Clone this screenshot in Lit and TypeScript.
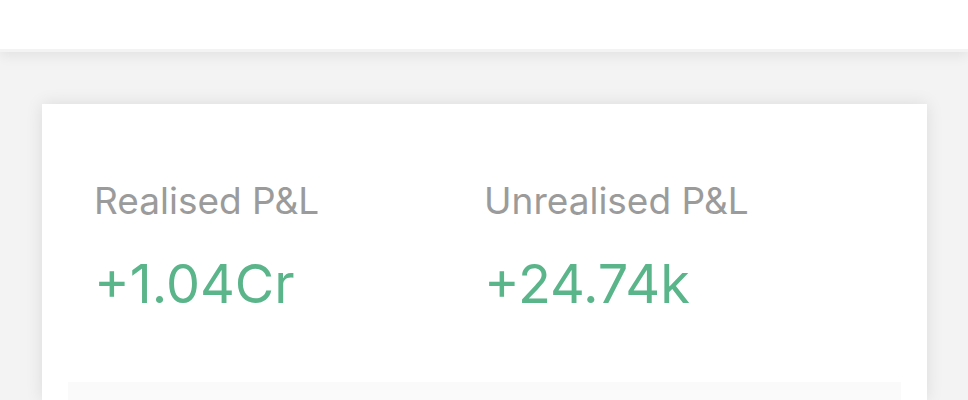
import { LitElement, html, css } from "lit";
import { customElement } from "lit/decorators.js";

const figures = [
  { label: "Realised P&L", value: "+1.04Cr" },
  { label: "Unrealised P&L", value: "+24.74k" },
];

@customElement("app-root")
export class AppRoot extends LitElement {
  static styles = css`
    :host {
      display: flex;
      flex-direction: column;
      min-height: 100vh;
      background: #f3f3f3;
      font-family: Inter, "Liberation Sans", sans-serif;
    }
    .topbar {
      height: 49px;
      background: #fff;
      border-bottom: 3px solid #f3f3f3;
      box-shadow: 0 4px 12px rgba(0, 0, 0, 0.07);
    }
    .card {
      display: flex;
      flex-direction: column;
      flex: 1;
      margin: 52px 41px 0 42px;
      padding: 75px 26px 0;
      background: #fff;
      box-shadow: 0 0 16px rgba(0, 0, 0, 0.1);
    }
    .summary {
      display: grid;
      grid-template-columns: 390px 1fr;
      margin: 0;
      padding: 0 26px;
    }
    .label {
      font-size: 37px;
      line-height: 44px;
      color: #9b9b9b;
    }
    .value {
      margin: 21px 0 0;
      font-size: 54px;
      line-height: 80px;
      color: #5bb58a;
    }
    .panel {
      flex: 1;
      margin-top: 58px;
      background: #fafafa;
    }
  `;

  render() {
    return html`
      <header class="topbar"></header>
      <main class="card">
        <dl class="summary">
          ${figures.map(
            (f) => html`<div>
              <dt class="label">${f.label}</dt>
              <dd class="value">${f.value}</dd>
            </div>`
          )}
        </dl>
        <section class="panel"></section>
      </main>
    `;
  }
}
